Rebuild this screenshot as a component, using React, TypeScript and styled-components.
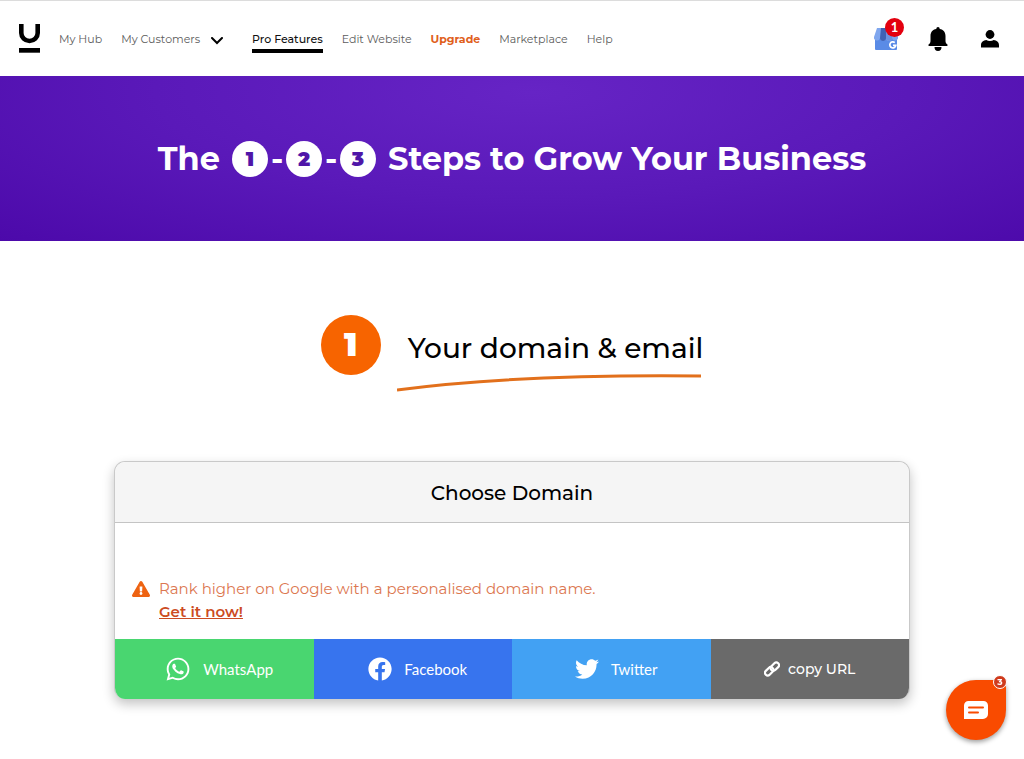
import React from "react";
import styled, { createGlobalStyle, css } from "styled-components";
import { FaWhatsapp, FaFacebook, FaTwitter, FaExclamationTriangle } from "react-icons/fa";

const GlobalStyle = createGlobalStyle`
  *, *::before, *::after { box-sizing: border-box; }
  body {
    margin: 0;
    background: #fff;
    color: #000;
    font-family: Montserrat, Inter, sans-serif;
  }
  h1, h2, h3, p { margin: 0; }
  button { font: inherit; border: 0; padding: 0; cursor: pointer; }
`;

const Header = styled.header`
  display: flex;
  align-items: center;
  height: 76px;
  padding: 0 22px 0 19px;
  border-top: 1px solid #dcdcdc;
`;

const Logo = styled.a`
  display: flex;
  margin-right: 19px;
`;

const Nav = styled.nav`
  display: flex;
  flex: 1;
  align-items: center;
  gap: 19px;
  padding-top: 4px;
`;

const NavLink = styled.a<{ $tone?: "active" | "accent" }>`
  padding-bottom: 3px;
  border-bottom: 4px solid transparent;
  margin-top: 4px;
  color: #5c5c5c;
  font-size: 11px;
  line-height: 14px;
  font-weight: 400;
  text-decoration: none;
  white-space: nowrap;
  ${({ $tone }) =>
    $tone === "active" &&
    css`
      color: #111;
      font-weight: 500;
      border-bottom-color: #000;
    `}
  ${({ $tone }) =>
    $tone === "accent" &&
    css`
      color: #e0601c;
      font-weight: 700;
    `}
`;

const MenuToggle = styled.button`
  display: flex;
  align-items: center;
  margin: 0 10px 0 -8px;
  background: none;
`;

const Tools = styled.div`
  display: flex;
  align-items: center;
  gap: 28px;
`;

const ToolButton = styled.button`
  position: relative;
  display: flex;
  justify-content: center;
  min-width: 24px;
  background: none;
`;

const ToolBadge = styled.span`
  position: absolute;
  top: -9px;
  right: -6px;
  width: 19px;
  height: 19px;
  border-radius: 50%;
  background: #e3000f;
  color: #fff;
  font-family: Lato, sans-serif;
  font-size: 13px;
  line-height: 19px;
  font-weight: 700;
  text-align: center;
`;

const Hero = styled.section`
  display: flex;
  justify-content: center;
  padding: 64px 24px 63px;
  background: radial-gradient(ellipse at 52% 10%, #6624c5 0%, #5a19b9 50%, #4c09aa 100%);
`;

const HeroTitle = styled.h1`
  display: flex;
  align-items: center;
  gap: 12px;
  color: #fff;
  font-size: 32px;
  line-height: 38px;
  font-weight: 700;
  white-space: nowrap;
`;

const Steps = styled.span`
  display: flex;
  align-items: center;
  gap: 3px;
`;

const StepDot = styled.span`
  width: 36px;
  height: 36px;
  border-radius: 50%;
  background: #fff;
  color: #4f16a8;
  font-size: 20px;
  line-height: 36px;
  font-weight: 900;
  text-align: center;
`;

const Dash = styled.span`
  width: 12px;
  text-align: center;
`;

const Main = styled.main`
  display: flex;
  flex-direction: column;
  align-items: center;
  padding: 74px 24px 40px;
`;

const SectionHeading = styled.div`
  display: flex;
  align-items: flex-start;
  gap: 16px;
`;

const SectionNumber = styled.span`
  width: 60px;
  height: 60px;
  border-radius: 50%;
  background: #f76400;
  color: #fff;
  font-size: 32px;
  line-height: 60px;
  font-weight: 900;
  text-align: center;
`;

const SectionTitle = styled.div`
  padding-top: 16px;
`;

const TitleText = styled.h2`
  padding-left: 11px;
  font-size: 28px;
  line-height: 34px;
  font-weight: 500;
  white-space: nowrap;
`;

const Swoosh = styled.svg`
  display: block;
  margin-top: 8px;
`;

const Card = styled.section`
  width: 100%;
  max-width: 796px;
  margin-top: 68px;
  border: 1px solid #c9c9c9;
  border-bottom: 0;
  border-radius: 11px;
  background: #fff;
  box-shadow: 0 5px 12px rgba(0, 0, 0, 0.24);
  overflow: hidden;
`;

const CardTitle = styled.h3`
  padding: 19px 16px 17px;
  border-bottom: 1px solid #c4c4c4;
  background: #f5f5f5;
  font-size: 20px;
  line-height: 24px;
  font-weight: 500;
  text-align: center;
`;

const Notice = styled.div`
  display: flex;
  gap: 9px;
  padding: 54px 17px 16px;
  color: #dc7750;
  font-size: 15px;
  line-height: 23px;
  font-weight: 400;
`;

const NoticeIcon = styled(FaExclamationTriangle)`
  flex: none;
  width: 18px;
  height: 16px;
  margin-top: 4px;
  color: #ee6312;
`;

const NoticeLink = styled.a`
  color: #cc4b22;
  font-weight: 600;
`;

const ShareBar = styled.div`
  display: grid;
  grid-template-columns: repeat(4, 1fr);
`;

const ShareButton = styled.button<{ $color: string; $compact?: boolean }>`
  display: flex;
  align-items: center;
  justify-content: center;
  gap: ${({ $compact }) => ($compact ? 8 : 12)}px;
  height: 60px;
  padding-left: ${({ $compact }) => ($compact ? 0 : 10)}px;
  background: ${({ $color }) => $color};
  color: #fff;
  font-family: ${({ $compact }) => ($compact ? "Montserrat, Inter" : "Lato")}, sans-serif;
  font-size: ${({ $compact }) => ($compact ? 14 : 15)}px;
  font-weight: ${({ $compact }) => ($compact ? 500 : 400)};
`;

const ChatButton = styled.button`
  position: fixed;
  right: 18px;
  bottom: 19px;
  display: flex;
  align-items: center;
  justify-content: center;
  width: 60px;
  height: 60px;
  border-radius: 50% 8px 50% 50%;
  background: #f94b00;
  box-shadow: 0 2px 5px rgba(0, 0, 0, 0.4);
`;

const ChatBadge = styled.span`
  position: absolute;
  top: -5px;
  right: -1px;
  width: 14px;
  height: 14px;
  border: 1px solid #fff;
  border-radius: 50%;
  background: #cf3a1c;
  color: #fff;
  font-size: 9px;
  line-height: 12px;
  font-weight: 700;
  text-align: center;
`;

const LogoMark = () => (
  <svg width="21" height="30" viewBox="0 0 21 30" aria-hidden="true">
    <path d="M2.300 0v9a8.200 8 0 0 0 16.400 0V0" fill="none" stroke="#000" strokeWidth="4.600" />
    <path d="M0 24h21v4.700H0z" />
  </svg>
);

const ShopIcon = () => (
  <svg width="24" height="24" viewBox="0 0 24 24" aria-hidden="true">
    <path d="M1 8h22v14a1 1 0 0 1-1 1H2a1 1 0 0 1-1-1z" fill="#5a8be6" />
    <path d="M3 1h18l3 9a3 3 0 0 1-6 1 3 3 0 0 1-6 0 3 3 0 0 1-6 0 3 3 0 0 1-6-1z" fill="#7fa6ee" />
    <path d="M7 1h5v10a3 3 0 0 1-6 0z" fill="#3f62b5" />
    <path d="M12 1h5l1 10a3 3 0 0 1-6 0z" fill="#6d92df" />
    <path d="M20.800 15.600a3 3 0 1 0 1 2.700h-2.800" fill="none" stroke="#fff" strokeWidth="1.700" />
  </svg>
);

const BellIcon = () => (
  <svg width="20" height="24" viewBox="0 0 20 24" aria-hidden="true">
    <path d="M10 0a1.700 1.700 0 0 0-1.700 1.700v.4C4.500 2.700 2.500 5.400 2.500 9v5c0 1.500-.6 2.500-1.900 3.600C.1 18 .3 19 1.100 19h17.800c.8 0 1-1 .5-1.400-1.300-1.100-1.900-2.100-1.900-3.600V9c0-3.600-2-6.300-5.800-6.900v-.4A1.700 1.700 0 0 0 10 0z" />
    <path d="M6.500 20h7a3.500 4 0 0 1-7 0z" />
  </svg>
);

const PersonIcon = () => (
  <svg width="18" height="18" viewBox="0 0 18 18" aria-hidden="true">
    <circle cx="9" cy="4.500" r="4.400" />
    <path d="M0 17.500v-2.300C0 12 2.500 10.300 5.300 10c1 .7 2.200 1.100 3.700 1.100s2.700-.4 3.700-1.100c2.800.3 5.300 2 5.300 5.200v2.300z" />
  </svg>
);

const LinkIcon = () => (
  <svg width="16" height="16" viewBox="0 0 16 16" fill="none" stroke="#fff" strokeWidth="2.200" aria-hidden="true">
    <rect x="6" y="3" width="9.600" height="5.400" rx="2.700" transform="rotate(-45 10.800 5.700)" />
    <rect x="0.400" y="7.600" width="9.600" height="5.400" rx="2.700" transform="rotate(-45 5.200 10.300)" />
  </svg>
);

const ChatIcon = () => (
  <svg width="24" height="18" viewBox="0 0 24 18" aria-hidden="true">
    <path d="M4.500 0h15A4.500 4.500 0 0 1 24 4.500v8.500a5 5 0 0 1-5 5H0V4.500A4.500 4.500 0 0 1 4.500 0z" fill="#fff" />
    <path d="M5 6.500h14M5 11.500h9" stroke="#f94b00" strokeWidth="2" strokeLinecap="round" />
  </svg>
);

export default function App() {
  return (
    <>
      <GlobalStyle />
      <Header>
        <Logo href="#" aria-label="Home">
          <LogoMark />
        </Logo>
        <Nav>
          <NavLink href="#">My Hub</NavLink>
          <NavLink href="#">My Customers</NavLink>
          <MenuToggle aria-label="Open My Customers menu">
            <svg width="12" height="8" viewBox="0 0 12 8" aria-hidden="true">
              <path d="M1 1l5 5 5-5" fill="none" stroke="#000" strokeWidth="2" strokeLinecap="round" />
            </svg>
          </MenuToggle>
          <NavLink href="#" $tone="active">Pro Features</NavLink>
          <NavLink href="#">Edit Website</NavLink>
          <NavLink href="#" $tone="accent">Upgrade</NavLink>
          <NavLink href="#">Marketplace</NavLink>
          <NavLink href="#">Help</NavLink>
        </Nav>
        <Tools>
          <ToolButton aria-label="Business profile">
            <ShopIcon />
            <ToolBadge>1</ToolBadge>
          </ToolButton>
          <ToolButton aria-label="Notifications">
            <BellIcon />
          </ToolButton>
          <ToolButton aria-label="Account">
            <PersonIcon />
          </ToolButton>
        </Tools>
      </Header>
      <Hero>
        <HeroTitle>
          <span>The</span>
          <Steps>
            <StepDot>1</StepDot>
            <Dash>-</Dash>
            <StepDot>2</StepDot>
            <Dash>-</Dash>
            <StepDot>3</StepDot>
          </Steps>
          <span>Steps to Grow Your Business</span>
        </HeroTitle>
      </Hero>
      <Main>
        <SectionHeading>
          <SectionNumber>1</SectionNumber>
          <SectionTitle>
            <TitleText>Your domain &amp; email</TitleText>
            <Swoosh width="304" height="20" viewBox="0 0 304 20" aria-hidden="true">
              <path d="M0 17Q122 1 304 3" fill="none" stroke="#e2701c" strokeWidth="3" />
            </Swoosh>
          </SectionTitle>
        </SectionHeading>
        <Card>
          <CardTitle>Choose Domain</CardTitle>
          <Notice>
            <NoticeIcon aria-hidden="true" />
            <div>
              <p>Rank higher on Google with a personalised domain name.</p>
              <NoticeLink href="#">Get it now!</NoticeLink>
            </div>
          </Notice>
          <ShareBar>
            <ShareButton $color="#49d670">
              <FaWhatsapp size={26} aria-hidden="true" />
              WhatsApp
            </ShareButton>
            <ShareButton $color="#3774ee">
              <FaFacebook size={24} aria-hidden="true" />
              Facebook
            </ShareButton>
            <ShareButton $color="#42a1f3">
              <FaTwitter size={24} aria-hidden="true" />
              Twitter
            </ShareButton>
            <ShareButton $color="#6a6a6a" $compact>
              <LinkIcon />
              copy URL
            </ShareButton>
          </ShareBar>
        </Card>
      </Main>
      <ChatButton aria-label="Open chat">
        <ChatIcon />
        <ChatBadge>3</ChatBadge>
      </ChatButton>
    </>
  );
}
